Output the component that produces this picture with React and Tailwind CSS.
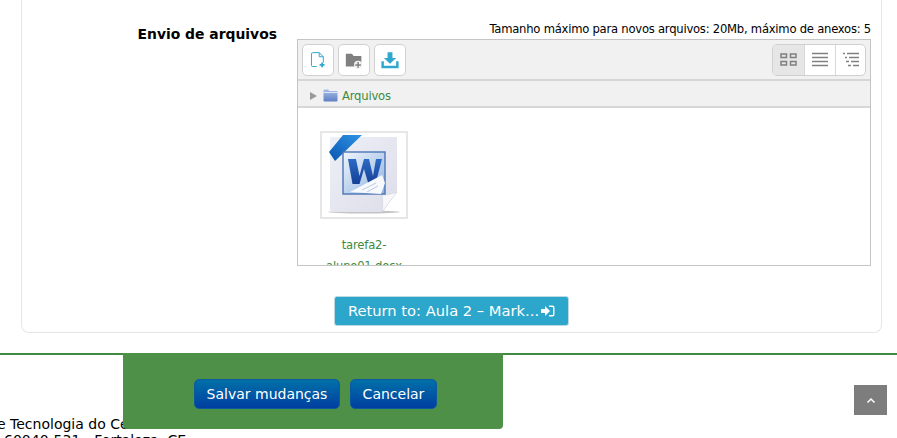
import React from 'react';

function NewFileIcon() {
  return (
    <svg width="18" height="18" viewBox="0 0 22 22" fill="none">
      <path d="M9.500 19H4.500A1.500 1.500 0 0 1 3 17.500V3.500A1.500 1.500 0 0 1 4.500 2h8l5 5v7" stroke="#2ea8ce" strokeWidth="1.200" />
      <path d="M12.500 2v5h5" stroke="#2ea8ce" strokeWidth="1.200" />
      <path d="M16 14v6M13 17h6" stroke="#2ea8ce" strokeWidth="2.200" />
    </svg>
  );
}

function NewFolderIcon() {
  return (
    <svg width="18" height="18" viewBox="0 0 22 22" fill="none">
      <path d="M1 3.500h7.500l2 2.500H20v13H1z" fill="#808080" />
      <circle cx="16" cy="17" r="5" fill="#f1f1f1" />
      <path d="M16 13.500v7M12.500 17h7" stroke="#808080" strokeWidth="1.800" />
    </svg>
  );
}

function DownloadIcon() {
  return (
    <svg width="18" height="18" viewBox="0 0 22 22" fill="none">
      <path d="M8 1.500h6v7h4.500L11 15.500 3.500 8.500H8z" fill="#2ea8ce" />
      <path d="M2 12.500v7h18v-7" stroke="#2ea8ce" strokeWidth="3" />
    </svg>
  );
}

function GridIcon() {
  return (
    <svg width="17" height="13" viewBox="0 0 17 13" fill="none" stroke="#808080" strokeWidth="1.500">
      <rect x="1" y="1" width="5.500" height="3.500" />
      <rect x="10.500" y="1" width="5.500" height="3.500" />
      <rect x="1" y="8.500" width="5.500" height="3.500" />
      <rect x="10.500" y="8.500" width="5.500" height="3.500" />
    </svg>
  );
}

function ListIcon() {
  return (
    <svg width="16" height="15" viewBox="0 0 16 15" fill="none" stroke="#808080" strokeWidth="1.400">
      <path d="M0 1.500h16M0 5.500h16M0 9.500h16M0 13.500h16" />
    </svg>
  );
}

function TreeIcon() {
  return (
    <svg width="16" height="15" viewBox="0 0 16 15" fill="none" stroke="#808080" strokeWidth="1.400">
      <path d="M0 1.500h2M4 1.500h12M2 5.500h2M6 5.500h10M3 9.500h3M8 9.500h8M5 13.500h3M10 13.500h6" />
    </svg>
  );
}

function FolderIcon() {
  return (
    <svg width="15" height="13" viewBox="0 0 15 13">
      <defs>
        <linearGradient id="folderFill" x1="0" y1="0" x2="0" y2="1">
          <stop offset="0" stopColor="#a9bfe8" />
          <stop offset="1" stopColor="#5f7fc4" />
        </linearGradient>
      </defs>
      <path d="M0.500 1.500a1 1 0 0 1 1-1h3.500l1.500 1.500h7a1 1 0 0 1 1 1v8.500a1 1 0 0 1-1 1h-12a1 1 0 0 1-1-1z" fill="url(#folderFill)" />
      <path d="M0.500 3.500h14" stroke="#dfe7f6" strokeWidth="1" />
    </svg>
  );
}

function WordFileIcon() {
  return (
    <svg width="84" height="84" viewBox="2 2 84 84">
      <defs>
        <linearGradient id="page" x1="0" y1="0" x2="1" y2="1">
          <stop offset="0" stopColor="#eef0f7" />
          <stop offset="1" stopColor="#dcdde9" />
        </linearGradient>
        <linearGradient id="ribbon" x1="0" y1="1" x2="1" y2="0">
          <stop offset="0" stopColor="#0a56b0" />
          <stop offset="1" stopColor="#2e93e4" />
        </linearGradient>
        <linearGradient id="tile" x1="0" y1="0" x2="1" y2="1">
          <stop offset="0" stopColor="#f0f5fc" />
          <stop offset="1" stopColor="#8fb2e0" />
        </linearGradient>
        <linearGradient id="letter" x1="0" y1="0" x2="0" y2="1">
          <stop offset="0" stopColor="#2c6bc4" />
          <stop offset="1" stopColor="#153f96" />
        </linearGradient>
      </defs>
      <ellipse cx="44" cy="81" rx="36" ry="1.500" fill="#c4c4c4" />
      <path d="M10 6h67v55L62 81H14a4 4 0 0 1-4-4z" fill="url(#page)" />
      <path d="M62 81c1-6 1-12 0-17 5 0 10-1 15-3z" fill="#f8f8fa" stroke="#c9cad3" strokeWidth="0.500" />
      <path d="M9 21L23 4h19L15 30z" fill="url(#ribbon)" />
      <rect x="23" y="21" width="42" height="42" fill="url(#tile)" stroke="#4a76b6" strokeWidth="1.400" />
      <path d="M28 28h8l3.500 17L44 28h5l4 17 3-17h6l-6.500 25h-7L44 38l-4.500 15h-7z" fill="url(#letter)" />
      <path d="M30 61l32-17 3 8-4 11z" fill="#f7f9fd" />
      <path d="M42 59l14-7M47 61l11-6" stroke="#a8bedd" strokeWidth="0.800" />
    </svg>
  );
}

export default function App() {
  const sans = "font-['DejaVu_Sans',Verdana,sans-serif]";

  return (
    <div className={`relative h-[438px] w-[897px] overflow-hidden bg-white text-black ${sans}`}>
      <div className="ml-[21px] flex h-[333px] w-[861px] flex-col rounded-b-[8px] border border-t-0 border-[#e6e6e6]">
        <div className="flex">
          <div className="w-[255px] pt-[25px] text-right text-[13.9px] leading-[19px] font-bold">Envio de arquivos</div>
          <div className="ml-[20px] w-[574px]">
            <div className="pt-[20px] text-right text-[11.6px] leading-[19px] tracking-[-0.24px]">
              Tamanho máximo para novos arquivos: 20Mb, máximo de anexos: 5
            </div>
            <div className="h-[227px] overflow-hidden border border-[#c4c4c4]">
              <div className="flex h-[41px] items-center justify-between border-b-2 border-[#d6d6d6] bg-[#f1f1f1] px-[4px]">
                <div className="flex gap-[4px]">
                  <button className="flex h-[32px] w-[32px] items-center justify-center rounded-[5px] border border-[#d0d0d0] bg-white"><NewFileIcon /></button>
                  <button className="flex h-[32px] w-[32px] items-center justify-center rounded-[5px] border border-[#d0d0d0] bg-white"><NewFolderIcon /></button>
                  <button className="flex h-[32px] w-[32px] items-center justify-center rounded-[5px] border border-[#d0d0d0] bg-white"><DownloadIcon /></button>
                </div>
                <div className="flex h-[32px] overflow-hidden rounded-[5px] border border-[#d0d0d0] bg-white">
                  <div className="flex w-[31px] items-center justify-center bg-[#e6e6e6]"><GridIcon /></div>
                  <div className="flex w-[31px] items-center justify-center border-l border-[#d8d8d8]"><ListIcon /></div>
                  <div className="flex w-[30px] items-center justify-center border-l border-[#d8d8d8]"><TreeIcon /></div>
                </div>
              </div>
              <div className="flex h-[27px] items-center border-b-2 border-[#d6d6d6] bg-[#f1f1f1] pt-[4px] pl-[12px] text-[11.6px] tracking-[-0.2px] text-[#3d8b3d]">
                <span className="mr-[6px] h-0 w-0 border-y-[4px] border-l-[7px] border-y-transparent border-l-[#999]"></span>
                <FolderIcon />
                <span className="mt-[2px] ml-[4px]">Arquivos</span>
              </div>
              <div className="pt-[23px] pl-[22px]">
                <div className="w-[88px]">
                  <div className="h-[88px] w-[88px] border-2 border-[#e6e6e6]"><WordFileIcon /></div>
                  <div className="mt-[16px] text-center text-[11.6px] leading-[21px] tracking-[-0.2px] text-[#3d8b3d]">tarefa2-<br />aluno01.docx</div>
                </div>
              </div>
            </div>
          </div>
        </div>
        <div className="mt-[30px] flex justify-center">
          <button className="flex h-[30px] w-[235px] items-center justify-center gap-[2px] rounded-[3px] border border-[#bcd9e4] bg-[#2ca6ca] text-[14.7px] text-white">
            Return to: Aula 2 – Mark...
            <svg width="14" height="12" viewBox="0 0 14 12" fill="white">
              <path d="M0 4h4V1l5 5-5 5V8H0z" />
              <path d="M8 0.500h3.500a2 2 0 0 1 2 2v7a2 2 0 0 1-2 2H8V10h3.500a.5.5 0 0 0 .5-.5v-7a.5.5 0 0 0-.5-.5H8z" />
            </svg>
          </button>
        </div>
      </div>

      <footer className="mt-[20px] h-[85px] border-t-2 border-[#3f8a3f] pt-[61px] pl-[7px] text-[14px] leading-[16px] whitespace-nowrap">
        <div className="-ml-[10px]">e Tecnologia do Ceará</div>
        <div className="-ml-[3px]">60040-531 - Fortaleza, CE</div>
      </footer>

      <div className="absolute top-[353px] left-[123px] flex h-[76px] w-[380px] items-center justify-center gap-[10px] rounded-b-[4px] bg-[#4f9049] pt-[5px] pl-[5px]">
        <button className="h-[30px] w-[146px] rounded-[5px] border border-[#0a5a9c] bg-gradient-to-b from-[#0070a8] to-[#003ea0] pt-[1px] text-[14px] text-white">Salvar mudanças</button>
        <button className="h-[30px] w-[87px] rounded-[5px] border border-[#0a5a9c] bg-gradient-to-b from-[#0070a8] to-[#003ea0] pt-[1px] text-[14px] text-white">Cancelar</button>
      </div>

      <button className="absolute top-[385px] left-[854px] flex h-[30px] w-[33px] items-center justify-center bg-[#7d7d7d]">
        <svg width="10" height="7" viewBox="0 0 10 7" fill="none" stroke="white" strokeWidth="1.500">
          <path d="M1.500 5.500L5 2l3.500 3.500" />
        </svg>
      </button>
    </div>
  );
}
